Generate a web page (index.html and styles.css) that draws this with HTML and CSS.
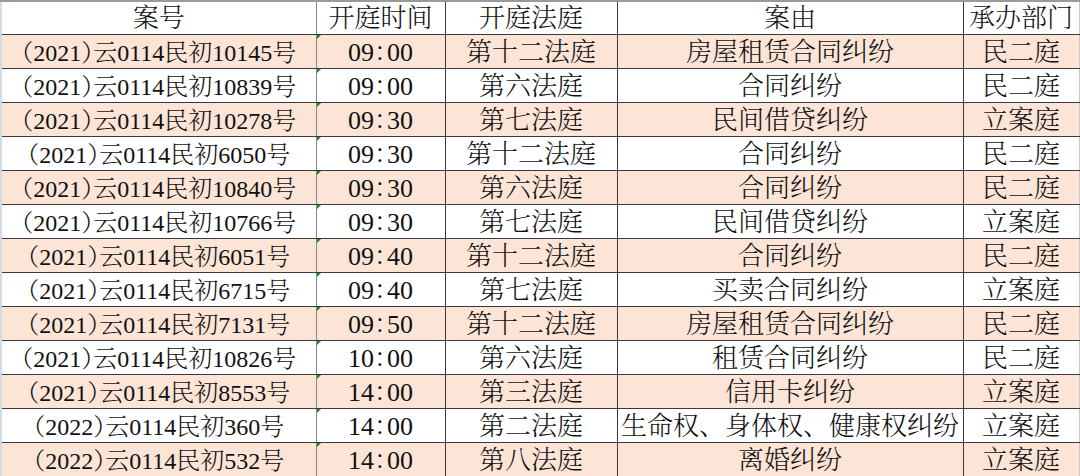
FILE: index.html
```html
<!DOCTYPE html>
<html lang="zh">
<head>
<meta charset="utf-8">
<title>开庭公告</title>
<link rel="stylesheet" href="styles.css">
</head>
<body>
<table class="sheet">
  <colgroup>
    <col class="c-no"><col class="c-time"><col class="c-court"><col class="c-cause"><col class="c-dept">
  </colgroup>
  <thead>
    <tr><th>案号</th><th>开庭时间</th><th>开庭法庭</th><th>案由</th><th>承办部门</th></tr>
  </thead>
  <tbody>
    <tr class="alt"><td class="no">（2021）云0114民初10145号</td><td class="time">09：00</td><td>第十二法庭</td><td>房屋租赁合同纠纷</td><td>民二庭</td></tr>
    <tr><td class="no">（2021）云0114民初10839号</td><td class="time">09：00</td><td>第六法庭</td><td>合同纠纷</td><td>民二庭</td></tr>
    <tr class="alt"><td class="no">（2021）云0114民初10278号</td><td class="time">09：30</td><td>第七法庭</td><td>民间借贷纠纷</td><td>立案庭</td></tr>
    <tr><td class="no">（2021）云0114民初6050号</td><td class="time">09：30</td><td>第十二法庭</td><td>合同纠纷</td><td>民二庭</td></tr>
    <tr class="alt"><td class="no">（2021）云0114民初10840号</td><td class="time">09：30</td><td>第六法庭</td><td>合同纠纷</td><td>民二庭</td></tr>
    <tr><td class="no">（2021）云0114民初10766号</td><td class="time">09：30</td><td>第七法庭</td><td>民间借贷纠纷</td><td>立案庭</td></tr>
    <tr class="alt"><td class="no">（2021）云0114民初6051号</td><td class="time">09：40</td><td>第十二法庭</td><td>合同纠纷</td><td>民二庭</td></tr>
    <tr><td class="no">（2021）云0114民初6715号</td><td class="time">09：40</td><td>第七法庭</td><td>买卖合同纠纷</td><td>立案庭</td></tr>
    <tr class="alt"><td class="no">（2021）云0114民初7131号</td><td class="time">09：50</td><td>第十二法庭</td><td>房屋租赁合同纠纷</td><td>民二庭</td></tr>
    <tr><td class="no">（2021）云0114民初10826号</td><td class="time">10：00</td><td>第六法庭</td><td>租赁合同纠纷</td><td>民二庭</td></tr>
    <tr class="alt"><td class="no">（2021）云0114民初8553号</td><td class="time">14：00</td><td>第三法庭</td><td>信用卡纠纷</td><td>立案庭</td></tr>
    <tr><td class="no">（2022）云0114民初360号</td><td class="time">14：00</td><td>第二法庭</td><td>生命权、身体权、健康权纠纷</td><td>立案庭</td></tr>
    <tr class="alt"><td class="no">（2022）云0114民初532号</td><td class="time">14：00</td><td>第八法庭</td><td>离婚纠纷</td><td>立案庭</td></tr>
  </tbody>
</table>
</body>
</html>
```
FILE: styles.css
```css
html, body {
  margin: 0;
  padding: 0;
  background: #ffffff;
}

.sheet {
  width: 1078px;
  table-layout: fixed;
  border-collapse: collapse;
  font-family: "Liberation Serif", "Noto Serif CJK SC", "Noto Sans CJK SC", serif;
  font-size: 26px;
  font-weight: 300;
  color: #111111;
  border-left: 2px solid #d3dbe8;
  border-top: 2px solid #9a9a9a;
  border-bottom: 2px solid #9a9a9a;
}

.c-no { width: 315px; }
.c-time { width: 129px; }
.c-court { width: 172px; }
.c-cause { width: 346px; }
.c-dept { width: 116px; }

.sheet th,
.sheet td {
  height: 33px;
  padding: 3px 0 0 0;
  text-align: center;
  vertical-align: middle;
  white-space: nowrap;
  overflow: hidden;
  border-right: 1px solid #3a3a3a;
  border-bottom: 1px solid #3a3a3a;
  line-height: 30px;
  box-sizing: border-box;
}

.sheet td {
  height: 34px;
}

.sheet th {
  font-weight: 300;
  height: 33px;
  padding-top: 2px;
  line-height: 30px;
}

.sheet th:first-child,
.sheet td:first-child {
  border-right-color: #8a8a8a;
}

.sheet th:last-child,
.sheet td:last-child {
  border-right-color: #c8c8c8;
}

.sheet tbody tr:last-child td {
  border-bottom: none;
}

.sheet tr.alt td {
  background: #fce4d6;
}

.sheet td.no {
  font-size: 24px;
  font-feature-settings: "halt";
}

.sheet td.time {
  position: relative;
  font-feature-settings: "halt";
}

.sheet td.time::before {
  content: "";
  position: absolute;
  left: 0;
  top: 0;
  width: 0;
  height: 0;
  border-top: 4px solid #1a8a1a;
  border-right: 4px solid transparent;
}
```
